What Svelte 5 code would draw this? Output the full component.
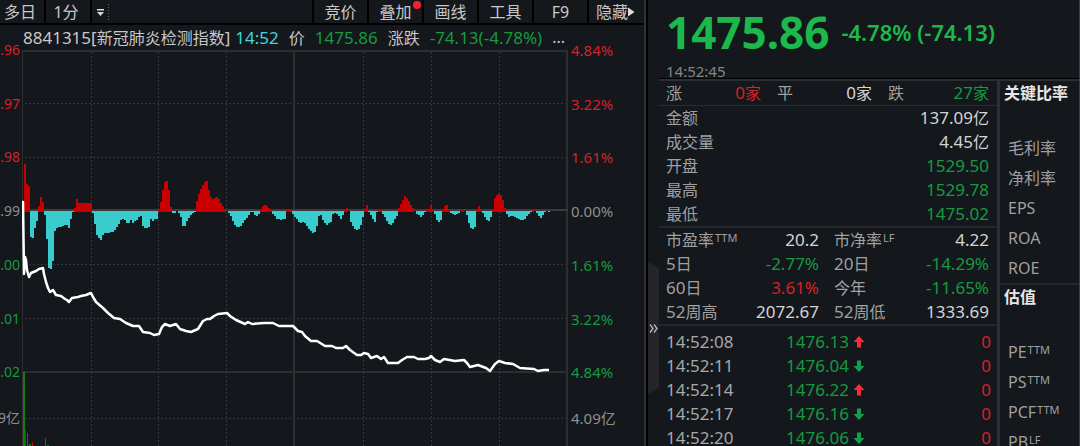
<script>
  const tools = ['竞价', '叠加', '画线', '工具', 'F9', '隐藏'];

  const leftAxis = [
    ['.96', 'up'], ['.97', 'up'], ['.98', 'up'], ['.99', 'flat'],
    ['.00', 'down'], ['.01', 'down'], ['.02', 'down']
  ];
  const rightAxis = [
    ['4.84%', 'up'], ['3.22%', 'up'], ['1.61%', 'up'], ['0.00%', 'flat'],
    ['1.61%', 'down'], ['3.22%', 'down'], ['4.84%', 'down']
  ];

  const quotes = [
    ['金额', '137.09', '亿', 'plain'],
    ['成交量', '4.45', '亿', 'plain'],
    ['开盘', '1529.50', '', 'down'],
    ['最高', '1529.78', '', 'down'],
    ['最低', '1475.02', '', 'down']
  ];
  const periods = [
    { a: ['', '市盈率', 'TTM'], av: '20.2', ac: 'plain', b: ['', '市净率', 'LF'], bv: '4.22', bc: 'plain' },
    { a: ['5', '日', ''], av: '-2.77%', ac: 'down', b: ['20', '日', ''], bv: '-14.29%', bc: 'down' },
    { a: ['60', '日', ''], av: '3.61%', ac: 'up', b: ['', '今年', ''], bv: '-11.65%', bc: 'down' },
    { a: ['52', '周高', ''], av: '2072.67', ac: 'plain', b: ['52', '周低', ''], bv: '1333.69', bc: 'plain' }
  ];
  const ticks = [
    ['14:52:08', '1476.13', true],
    ['14:52:11', '1476.04', false],
    ['14:52:14', '1476.22', true],
    ['14:52:17', '1476.16', false],
    ['14:52:20', '1476.06', false]
  ];
  const ratios = [['毛利率', ''], ['净利率', ''], ['EPS', ''], ['ROA', ''], ['ROE', '']];
  const valuation = [['PE', 'TTM'], ['PS', 'TTM'], ['PCF', 'TTM'], ['PB', 'LF']];

  // Momentum profile: x position, signed height around the zero line.
  const profile = [
    [24,47],[25,47],[26,29],[28,25],[30,24],[31,-26],[34,-28],[35,-17],[37,-10],[38,3],[39,5],[41,14],[43,9],[44,1],
    [45,-4],[47,-28],[49,-57],[52,-58],[54,-42],[55,-20],[58,-16],[62,-16],[66,-13],[69,-17],[71,-8],[73,-1],
    [75,3],[77,12],[79,8],[91,8],[92,1],[94,-5],[96,-22],[98,-26],[101,-29],[103,-24],[105,-22],[114,-21],[117,-16],
    [120,-11],[122,-7],[125,-9],[128,-13],[131,-9],[133,-12],[137,-9],[140,-4],[142,-7],[143,-15],[146,-18],
    [149,-16],[151,-8],[153,-10],[155,-8],[158,-8],[159,2],[162,13],[164,28],[167,30],[169,21],[171,4],[172,-2],
    [176,-2],[178,1],[179,-2],[181,-6],[183,-15],[184,-18],[186,-13],[188,-8],[191,-4],[195,-1],[196,5],[198,14],
    [201,22],[204,28],[207,30],[209,21],[212,11],[215,13],[218,14],[220,9],[223,5],[225,2],[228,-1],[230,-3],
    [232,-8],[234,-13],[236,-16],[240,-16],[243,-12],[246,-8],[249,-4],[252,1],[254,-3],[258,-6],[260,-1],[262,4],
    [265,6],[268,4],[271,1],[273,-3],[277,-8],[281,-9],[285,-8],[287,1],[289,1],[291,1],[293,-3],[296,-7],[300,-12],
    [304,-11],[307,-15],[310,-19],[312,-22],[315,-21],[317,-15],[319,-5],[321,-4],[324,-11],[327,-14],[331,-11],
    [332,-3],[336,-2],[339,-5],[341,-8],[343,-4],[345,1],[346,5],[348,1],[350,-1],[351,-11],[353,-15],[356,-19],
    [360,-18],[362,-11],[364,-1],[366,2],[367,6],[369,-1],[370,-2],[372,-7],[375,-11],[376,-4],[378,1],[381,1],
    [383,-3],[386,-8],[389,-13],[392,-14],[395,-8],[398,-3],[399,3],[402,9],[405,15],[408,12],[411,6],[414,2],
    [417,-3],[421,-6],[424,-3],[426,1],[429,2],[431,6],[433,1],[434,1],[436,-8],[439,-11],[442,-8],[443,1],[446,7],
    [448,5],[450,-1],[454,-4],[457,-3],[460,-1],[462,1],[466,0],[468,-8],[470,-16],[473,-18],[475,-16],[477,1],
    [479,5],[481,2],[483,-2],[485,-6],[488,-11],[490,-9],[492,-3],[493,1],[495,13],[498,17],[502,16],[504,6],
    [506,-1],[508,-6],[512,-5],[516,-6],[519,-8],[522,-10],[525,-8],[529,-3],[533,1],[536,-1],[538,-4],[541,-7],
    [544,-3],[546,1],[549,-1]
  ];
  const heightAt = (x) => {
    const i = profile.findIndex((p) => p[0] >= x);
    if (i <= 0) return profile[0][1];
    const [x0, h0] = profile[i - 1];
    const [x1, h1] = profile[i];
    return Math.round(h0 + ((h1 - h0) * (x - x0)) / (x1 - x0));
  };
  const bars = [];
  for (let x = 24; x < 549; x += 2) bars.push({ x, h: heightAt(x + 1) });

  const price =
    '22,202 23,202 24,274 25,257 26,260 27,270 29,277 31,273 36,271 39,269 43,268 44,274 46,282 48,288 50,292 53,290 56,295 61,296 65,299 67,300 69,302 72,298 78,297 81,296 86,295 91,293 93,297 96,302 103,308 108,313 114,318 120,319 126,323 133,326 139,326 143,332 150,333 154,335 159,334 162,327 165,324 170,326 173,325 176,324 180,329 186,331 191,332 198,329 203,321 207,319 210,319 214,316 218,314 227,313 230,316 236,320 245,324 248,322 252,324 264,323 273,323 279,326 286,326 293,326 298,331 302,332 305,336 311,341 317,341 325,346 332,346 336,348 343,348 346,346 350,350 357,355 361,355 364,353 368,354 371,358 377,356 381,359 384,357 388,363 398,363 402,360 407,357 414,357 418,359 425,359 429,358 431,356 435,360 440,362 444,359 455,361 464,360 467,363 470,367 478,365 486,368 490,371 495,364 499,361 505,363 513,364 520,368 534,369 538,371 544,370 549,370';
</script>

<main>
  <section class="chart-panel">
    <nav class="toolbar">
      <button class="days">多日</button>
      <button class="days">1分</button>
      <button class="more" aria-label="周期">
        <svg width="14" height="20" viewBox="0 0 14 20">
          <path d="M1 7h7v1.500h-7zM1 10h7l-3.500 4z" fill="#ddd" />
          <path d="M12.500 2v16" stroke="#666" stroke-dasharray="1 2" />
        </svg>
      </button>
      <span class="spacer"></span>
      {#each tools as tool, i}
        <button class="tool">
          {tool}
          {#if i === 1}<i class="dot"></i>{/if}
          {#if i === 5}
            <svg width="7" height="10" viewBox="0 0 7 10"><path d="M0 0.5v9l6.500-4.500z" fill="#ddd" /></svg>
          {/if}
        </button>
      {/each}
    </nav>

    <header class="legend">
      <span><span class="num">8841315[</span>新冠肺炎检测指数<span class="num">]</span></span>
      <span class="num time">14:52</span>
      <span class="tag">价</span>
      <span class="num down">1475.86</span>
      <span class="tag">涨跌</span>
      <span class="num down">-74.13(-4.78%)</span>
      <span class="rest">...</span>
    </header>

    <div class="chart">
      <div class="axis left">
        {#each leftAxis as [text, tone]}<span class={tone}>{text}</span>{/each}
        <span class="flat volume">9亿</span>
      </div>
      <svg class="plot" viewBox="22 50 546 396" preserveAspectRatio="none">
        <g stroke="#33363a" stroke-dasharray="2 2" fill="none">
          {#each [91, 158, 226, 363, 431, 499] as x}<path d="M{x + 0.5} 52V446" />{/each}
          {#each [103, 157, 264, 318, 418] as y}<path d="M25 {y + 0.5}H566" />{/each}
        </g>
        <g fill="#2e2e32">
          <rect x="22" y="50" width="546" height="2" />
          <rect x="22" y="50" width="1" height="396" />
          <rect x="566" y="50" width="2" height="396" />
          <rect x="293" y="50" width="2" height="396" />
          <rect x="22" y="371" width="546" height="2" />
          <rect x="22" y="209" width="546" height="2" fill="#3b3b3f" />
        </g>
        <g shape-rendering="crispEdges">
          {#each bars as { x, h }}
            {#if h > 0}
              <rect {x} y={211 - h} width="2" height={h + 1} fill="#c80000" />
            {:else if h < 0}
              <rect {x} y="211" width="2" height={-h} fill="#3acccc" />
            {/if}
          {/each}
        </g>
        <g fill="#147a14">
          <rect x="23" y="372" width="2" height="74" />
          <rect x="27" y="433" width="1" height="13" />
          <rect x="29" y="444" width="2" height="2" />
          <rect x="45" y="438" width="1" height="8" />
          <rect x="47" y="445" width="2" height="1" />
        </g>
        <g fill="#b01010">
          <rect x="25" y="430" width="1" height="16" />
          <rect x="32" y="442" width="1" height="4" />
        </g>
        <polyline points={price} fill="none" stroke="#fff" stroke-width="2.500" stroke-linejoin="round" />
      </svg>
      <div class="axis right">
        {#each rightAxis as [text, tone]}<span class={tone}>{text}</span>{/each}
        <span class="flat volume">4.09亿</span>
      </div>
    </div>
  </section>

  <section class="quote-panel">
    <header class="headline">
      <div class="last">
        <strong>1475.86</strong>
        <span>-4.78% (-74.13)</span>
      </div>
      <time>14:52:45</time>
    </header>

    <div class="body">
      <div class="gutter">
        <button class="fold" aria-label="收起">
          <svg width="9" height="9" viewBox="0 0 9 9">
            <path d="M1 .5l3 4-3 4M5 .5l3 4-3 4" fill="none" stroke="#bbb" stroke-width="1.300" />
          </svg>
        </button>
      </div>

      <div class="data">
        <table class="breadth">
          <tbody>
            <tr>
              <th>涨</th><td class="up rising"><span class="num">0</span>家</td>
              <th>平</th><td class="plain level"><span class="num">0</span>家</td>
              <th>跌</th><td class="down"><span class="num">27</span>家</td>
            </tr>
          </tbody>
        </table>
        <table class="daily">
          <tbody>
            {#each quotes as [label, value, unit, tone]}
              <tr><th>{label}</th><td class={tone}><span class="num">{value}</span>{unit}</td></tr>
            {/each}
          </tbody>
        </table>
        <table class="periods">
          <tbody>
            {#each periods as p}
              <tr>
                <th><span class="num">{p.a[0]}</span>{p.a[1]}<small>{p.a[2]}</small></th>
                <td class="num {p.ac}">{p.av}</td>
                <th class="pad"><span class="num">{p.b[0]}</span>{p.b[1]}<small>{p.b[2]}</small></th>
                <td class="num {p.bc}">{p.bv}</td>
              </tr>
            {/each}
          </tbody>
        </table>
        <table class="ticks">
          <tbody>
            {#each ticks as [time, value, rising]}
              <tr>
                <th class="num">{time}</th>
                <td class="num down trade">{value}</td>
                <td class="arrow">
                  <svg width="12" height="12" viewBox="0 0 12 12">
                    {#if rising}
                      <path d="M6 0l5.500 6H8v5.500H4V6H.5z" fill="#ff2a35" />
                    {:else}
                      <path d="M6 12l5.500-6H8V.5H4V6H.5z" fill="#14a04a" />
                    {/if}
                  </svg>
                </td>
                <td class="num up">0</td>
              </tr>
            {/each}
          </tbody>
        </table>
      </div>

      <aside>
        <h2>关键比率</h2>
        <ul>
          {#each ratios as [name]}<li>{name}</li>{/each}
        </ul>
        <h2 class="rule">估值</h2>
        <ul>
          {#each valuation as [name, basis]}<li>{name}<small>{basis}</small></li>{/each}
        </ul>
      </aside>
    </div>
  </section>
</main>

<style>
  :global(body) {
    margin: 0;
    background: #14171c;
  }
  main {
    display: grid;
    grid-template-columns: minmax(0, 3fr) minmax(0, 2fr);
    height: 100vh;
    overflow: hidden;
    background: #14171c;
    color: #c8c8c8;
    font: 16px/24px 'Noto Sans', 'Noto Sans CJK SC', sans-serif;
    white-space: nowrap;
  }
  button {
    margin: 0;
    padding: 0;
    border: 0;
    background: none;
    color: inherit;
    font: inherit;
  }
  .num {
    font-size: 17px;
  }
  .up {
    color: #d3222a;
  }
  .down {
    color: #169a40;
  }
  .flat {
    color: #8e8e8e;
  }
  .plain {
    color: #d4d4d4;
  }

  .chart-panel {
    display: flex;
    flex-direction: column;
    min-width: 0;
    border-right: 2px solid #000;
    box-shadow: inset -2px 0 #323236;
    overflow: hidden;
  }
  .toolbar {
    display: flex;
    height: 23px;
    border-bottom: 2px solid #000;
    margin-right: 2px;
    padding-right: 2px;
    flex: none;
  }
  .toolbar button {
    display: flex;
    align-items: center;
    justify-content: center;
    position: relative;
  }
  .days {
    width: 46px;
    border-right: 2px solid #000;
    box-sizing: border-box;
  }
  .toolbar .days {
    padding-right: 4px;
  }
  .toolbar .more {
    padding-left: 4px;
  }
  .spacer {
    flex: 1;
  }
  .tool {
    width: 55px;
    border-left: 2px solid #000;
    box-sizing: border-box;
  }
  .dot {
    position: absolute;
    top: 1px;
    right: 1px;
    width: 8px;
    height: 8px;
    border-radius: 50%;
    background: #f5222d;
  }
  .legend {
    display: flex;
    height: 25px;
    padding-left: 23px;
    line-height: 26px;
    flex: none;
  }
  .legend .time {
    margin-left: 5px;
    color: #3fd8dc;
  }
  .legend .tag {
    margin: 0 10px;
  }
  .legend .rest {
    margin-left: 10px;
    line-height: 24px;
  }
  .chart {
    display: grid;
    grid-template-columns: 22px minmax(0, 1fr) 78px;
    flex: 1;
    min-height: 0;
  }
  .plot {
    display: block;
    width: 100%;
    height: 396px;
  }
  .axis {
    display: flex;
    flex-direction: column;
    justify-content: space-between;
    height: 390px;
    margin-top: -11px;
    font-size: 15px;
    line-height: 22px;
  }
  .left {
    align-items: flex-end;
    padding-right: 2px;
    font-size: 14px;
  }
  .right {
    padding-left: 3px;
  }
  .volume {
    margin-top: -8px;
  }

  .quote-panel {
    display: flex;
    flex-direction: column;
    min-width: 0;
    border-right: 1px solid #3a3d42;
  }
  .headline {
    display: flex;
    flex-direction: column;
    height: 79px;
    margin-left: 11px;
    padding: 1px 0 0 7px;
    box-sizing: border-box;
    border-bottom: 1px solid #000;
    box-shadow: 0 2px #2d2e32;
    flex: none;
  }
  .last {
    display: flex;
    align-items: center;
    gap: 12px;
    height: 62px;
    color: #1bb84b;
  }
  .last strong {
    font-size: 44px;
    line-height: 62px;
  }
  .last span {
    font-size: 22px;
    font-weight: 600;
  }
  time {
    color: #858585;
    font-size: 15px;
    line-height: 16px;
  }
  .body {
    display: grid;
    grid-template-columns: 11px minmax(0, 1fr) 82px;
    flex: 1;
    min-height: 0;
    padding-top: 2px;
  }
  .gutter {
    padding-top: 181px;
  }
  .fold {
    display: grid;
    place-items: center;
    width: 11px;
    height: 132px;
    background: #24242a;
    clip-path: polygon(0 0, 100% 6px, 100% 126px, 0 100%);
  }
  table {
    width: 100%;
    border-collapse: collapse;
    table-layout: fixed;
  }
  .data {
    min-width: 0;
  }
  th,
  td {
    height: 24px;
    padding: 0;
    line-height: 24px;
  }
  th {
    color: #a0a0a0;
    font-weight: 400;
    text-align: left;
  }
  td {
    text-align: right;
  }
  th:first-child {
    padding-left: 7px;
  }
  td:last-child {
    padding-right: 8px;
  }
  .breadth {
    border-bottom: 1px solid #2d2e32;
  }
  .breadth th {
    width: 16px;
  }
  .breadth td + th {
    padding-left: 16px;
  }
  .breadth .rising,
  .breadth .level {
    width: 79px;
  }
  .daily,
  .periods {
    border-bottom: 2px solid #26272b;
  }
  .periods .pad {
    padding-left: 15px;
  }
  .periods th:first-child {
    width: 84px;
  }
  .periods td {
    width: 69px;
  }
  .periods .pad + td {
    width: 78px;
  }
  .ticks {
    margin-top: 4px;
  }
  .ticks th {
    width: 84px;
    color: #a8a8a8;
  }
  .ticks .trade {
    width: 99px;
  }
  .ticks .arrow {
    width: 18px;
    padding-left: 4px;
    text-align: left;
  }
  .ticks td:last-child {
    padding-right: 6px;
  }
  .arrow svg {
    display: block;
  }
  small {
    margin-left: 1px;
    font-size: 11px;
    line-height: 10px;
    vertical-align: 4px;
  }
  aside {
    border-left: 3px solid #2d2e32;
  }
  h2 {
    margin: 0;
    padding-left: 4px;
    color: #e6e6e6;
    font-size: 16px;
    font-weight: 700;
    line-height: 24px;
  }
  .rule {
    border-top: 2px solid #26272b;
  }
  ul {
    margin: 0;
    padding: 28px 0 0 8px;
    color: #a0a0a0;
    list-style: none;
    line-height: 30px;
  }
</style>
